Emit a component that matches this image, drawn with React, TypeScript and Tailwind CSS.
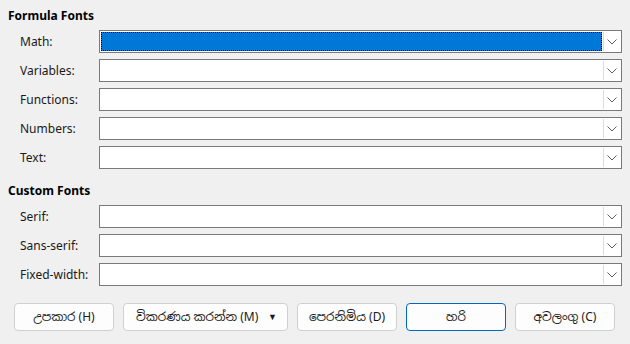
const formula = ["Math:", "Variables:", "Functions:", "Numbers:", "Text:"];
const custom = ["Serif:", "Sans-serif:", "Fixed-width:"];

function Chevron() {
  return (
    <svg width="10" height="6" viewBox="0 0 10 6" className="block">
      <path d="M0.5 0.5 L5 5 L9.5 0.5" fill="none" stroke="#5f5f5f" strokeWidth="1" />
    </svg>
  );
}

function Combo({ selected }: { selected?: boolean }) {
  return (
    <div className="flex-1 h-[23px] flex border border-[#7a7a7a] bg-white">
      <div
        className={
          selected
            ? "flex-1 m-[1px] bg-[#0078d7] outline outline-1 outline-dotted outline-black -outline-offset-1"
            : "flex-1"
        }
      />
      <div className="w-[17px] shrink-0 my-[1px] mr-[1px] border-l border-[#dcdcdc] bg-white flex items-center justify-center">
        <Chevron />
      </div>
    </div>
  );
}

function Row({ label, selected }: { label: string; selected?: boolean }) {
  return (
    <div className="flex items-center h-[23px]">
      <div className="w-[79px] text-[12px] text-[#1a1a1a]">{label}</div>
      <Combo selected={selected} />
    </div>
  );
}

function Btn({ children, className = "", primary }: { children: React.ReactNode; className?: string; primary?: boolean }) {
  return (
    <button
      className={
        "h-[28px] rounded-[4px] bg-[#fdfdfd] text-[12px] text-[#1a1a1a] border " +
        (primary ? "border-[#0067c0]" : "border-[#d0d0d0]") +
        " " +
        className
      }
    >
      {children}
    </button>
  );
}

export default function App() {
  return (
    <div
      className="w-[630px] h-[344px] bg-[#f0f0f0] pl-[8px] pr-[8px] pt-[8px] overflow-hidden"
      style={{ fontFamily: '"Segoe UI", "Noto Sans", "Noto Sans Sinhala", "Iskoola Pota", sans-serif' }}
    >
      <div className="h-[16px] text-[12px] font-bold text-black leading-[16px]">Formula Fonts</div>
      <div className="flex flex-col gap-[6px] mt-[6px] pl-[12px]">
        {formula.map((l, i) => (
          <Row key={l} label={l} selected={i === 0} />
        ))}
      </div>
      <div className="h-[16px] mt-[14px] text-[12px] font-bold text-black leading-[16px]">Custom Fonts</div>
      <div className="flex flex-col gap-[6px] mt-[6px] pl-[12px]">
        {custom.map((l) => (
          <Row key={l} label={l} />
        ))}
      </div>
      <div className="flex gap-[9px] mt-[17px] pl-[6px]">
        <Btn className="w-[100px]">උපකාර (H)</Btn>
        <Btn className="w-[165px] flex items-center pl-[12px] pr-[10px]">
          <span className="flex-1 text-left">විකරණය කරන්න (M)</span>
          <span className="text-[9px]">▼</span>
        </Btn>
        <Btn className="w-[100px]">පෙරනිමිය (D)</Btn>
        <Btn className="w-[100px]" primary>
          හරි
        </Btn>
        <Btn className="w-[100px]">අවලංගු (C)</Btn>
      </div>
    </div>
  );
}
